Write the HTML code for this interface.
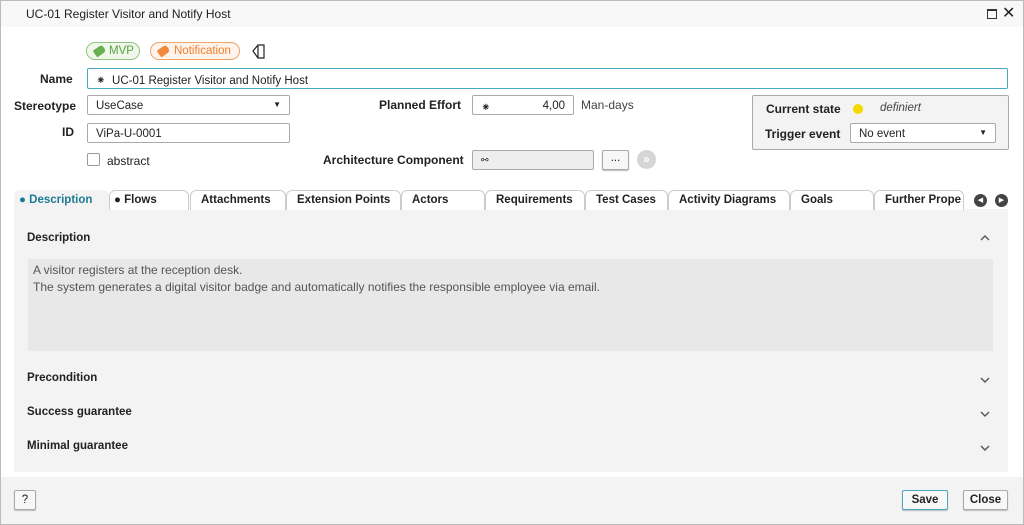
<!DOCTYPE html>
<html><head><meta charset="utf-8"><style>
*{box-sizing:border-box;margin:0;padding:0}
body{width:1024px;height:525px;overflow:hidden;background:#fff;font-family:"Liberation Sans",sans-serif;font-size:12px;color:#222;position:relative}
.a{position:absolute}
.b{font-weight:bold}
.box{position:absolute;background:#fff;border:1px solid #aaa;border-radius:2px;height:20px;padding:4px 8px 0;font-size:11.5px}
.tab{position:absolute;top:190px;height:20px;font-weight:bold;font-size:11.5px;padding-top:3px;border:1px solid #ccc;border-bottom:none;border-radius:6px 6px 0 0;background:#fff;padding-left:10px}
.sec{position:absolute;left:27px;font-weight:bold;font-size:11.5px}
.chev{position:absolute;left:980px}
.btn{position:absolute;background:#f7f7f7;border:1px solid #aaa;border-radius:2px;height:20px;font-size:11.5px;text-align:center;padding-top:3px;box-shadow:0 1px 1px #bbb}
</style></head><body>
<div class="a" style="left:0;top:0;width:1024px;height:525px;border:1px solid #bbb"></div>
<div class="a" style="left:1px;top:1px;width:1022px;height:26px;background:#f8f8f8"></div>
<div class="a" style="left:26px;top:7px;font-size:12px">UC-01 Register Visitor and Notify Host</div>
<div class="a" style="left:987px;top:9px;width:10px;height:10px;border:1.5px solid #333;border-top-width:2.5px"></div>
<div class="a" style="left:1002px;top:3px;font-size:16px">✕</div>

<div class="a" style="left:86px;top:42px;width:54px;height:18px;border:1px solid #8fc67a;border-radius:9px;background:#f0f8ec;color:#5aa040;font-size:11.5px;padding:2px 0 0 22px">MVP</div>
<div class="a" style="left:94px;top:47px;width:11px;height:8px;background:#6bb050;transform:rotate(-35deg);border-radius:1px 3px 3px 1px"></div>
<div class="a" style="left:150px;top:42px;width:90px;height:18px;border:1px solid #f0a36a;border-radius:9px;background:#fff4ec;color:#ee8030;font-size:11.5px;padding:2px 0 0 23px">Notification</div>
<div class="a" style="left:158px;top:47px;width:11px;height:8px;background:#f08a40;transform:rotate(-35deg);border-radius:1px 3px 3px 1px"></div>
<svg class="a" style="left:250px;top:42px" width="18" height="18"><path d="M3 9 L8 3 L14 3 L14 16 L8 16 Z M8 4 L8 16" fill="none" stroke="#222" stroke-width="1.2"/></svg>

<div class="a b" style="left:40px;top:72px">Name</div>
<div class="box" style="left:87px;top:68px;width:921px;height:21px;border-color:#4aa8c0">⁕ &nbsp;UC-01 Register Visitor and Notify Host</div>
<div class="a b" style="left:14px;top:99px">Stereotype</div>
<div class="box" style="left:87px;top:95px;width:203px">UseCase<span style="position:absolute;right:8px;top:4px;font-size:8px">▼</span></div>
<div class="a b" style="left:62px;top:125px">ID</div>
<div class="box" style="left:87px;top:123px;width:203px">ViPa-U-0001</div>
<div class="a" style="left:87px;top:153px;width:13px;height:13px;border:1px solid #999;border-radius:2px"></div>
<div class="a" style="left:107px;top:154px">abstract</div>

<div class="a b" style="left:379px;top:98px">Planned Effort</div>
<div class="box" style="left:472px;top:95px;width:102px;text-align:right">4,00<span style="position:absolute;left:8px">⁕</span></div>
<div class="a" style="left:581px;top:98px;color:#444">Man-days</div>
<div class="a b" style="left:323px;top:153px">Architecture Component</div>
<div class="box" style="left:472px;top:150px;width:122px;background:#eee;font-size:9px">⚯</div>
<div class="btn" style="left:602px;top:150px;width:27px;padding-top:1px">...</div>
<div class="a" style="left:637px;top:150px;width:19px;height:19px;border-radius:50%;background:#d5d5d5;color:#fff;font-size:12px;text-align:center;line-height:18px;font-weight:bold">»</div>

<div class="a" style="left:752px;top:95px;width:257px;height:55px;background:#f3f3f3;border:1px solid #aaa;border-radius:2px"></div>
<div class="a b" style="left:766px;top:102px">Current state</div>
<div class="a" style="left:853px;top:104px;width:10px;height:10px;border-radius:50%;background:#f5d800"></div>
<div class="a" style="left:880px;top:102px;font-style:italic;font-size:11.5px;color:#444">definiert</div>
<div class="a b" style="left:765px;top:127px">Trigger event</div>
<div class="box" style="left:850px;top:123px;width:146px">No event<span style="position:absolute;right:8px;top:4px;font-size:8px">▼</span></div>

<div class="a" style="left:14px;top:209px;width:994px;height:263px;background:#f3f3f3"></div>
<div class="tab" style="left:14px;width:95px;background:#f3f3f3;border-color:#f3f3f3;color:#1e7a94;padding-left:4px">● Description</div>
<div class="tab" style="left:109px;width:80px;padding-left:4px;font-weight:bold">● Flows</div>
<div class="tab" style="left:190px;width:96px">Attachments</div>
<div class="tab" style="left:286px;width:115px">Extension Points</div>
<div class="tab" style="left:401px;width:84px">Actors</div>
<div class="tab" style="left:485px;width:100px">Requirements</div>
<div class="tab" style="left:585px;width:83px">Test Cases</div>
<div class="tab" style="left:668px;width:122px">Activity Diagrams</div>
<div class="tab" style="left:790px;width:84px">Goals</div>
<div class="tab" style="left:874px;width:90px;overflow:hidden;white-space:nowrap">Further Prope</div>
<div class="a" style="left:974px;top:194px;width:13px;height:13px;border-radius:50%;background:#444;color:#fff;font-size:7px;text-align:center;line-height:13px">◀</div>
<div class="a" style="left:995px;top:194px;width:13px;height:13px;border-radius:50%;background:#444;color:#fff;font-size:7px;text-align:center;line-height:13px">▶</div>

<div class="sec" style="top:232px">Description</div>
<svg class="chev" style="top:235px" width="10" height="6"><path d="M1 5 L5 1 L9 5" fill="none" stroke="#555" stroke-width="1.4"/></svg>
<div class="a" style="left:28px;top:259px;width:965px;height:92px;background:#e8e8e8;color:#555;padding:3px 5px;line-height:17px">A visitor registers at the reception desk.<br>The system generates a digital visitor badge and automatically notifies the responsible employee via email.</div>
<div class="sec" style="top:372px">Precondition</div>
<svg class="chev" style="top:377px" width="10" height="6"><path d="M1 1 L5 5 L9 1" fill="none" stroke="#555" stroke-width="1.4"/></svg>
<div class="sec" style="top:406px">Success guarantee</div>
<svg class="chev" style="top:411px" width="10" height="6"><path d="M1 1 L5 5 L9 1" fill="none" stroke="#555" stroke-width="1.4"/></svg>
<div class="sec" style="top:440px">Minimal guarantee</div>
<svg class="chev" style="top:445px" width="10" height="6"><path d="M1 1 L5 5 L9 1" fill="none" stroke="#555" stroke-width="1.4"/></svg>

<div class="a" style="left:1px;top:477px;width:1022px;height:47px;background:#f3f3f3"></div>
<div class="btn" style="left:14px;top:490px;width:22px">?</div>
<div class="btn" style="left:902px;top:490px;width:46px;border-color:#4aa8c0;font-weight:bold">Save</div>
<div class="btn" style="left:963px;top:490px;width:45px;font-weight:bold">Close</div>
</body></html>
